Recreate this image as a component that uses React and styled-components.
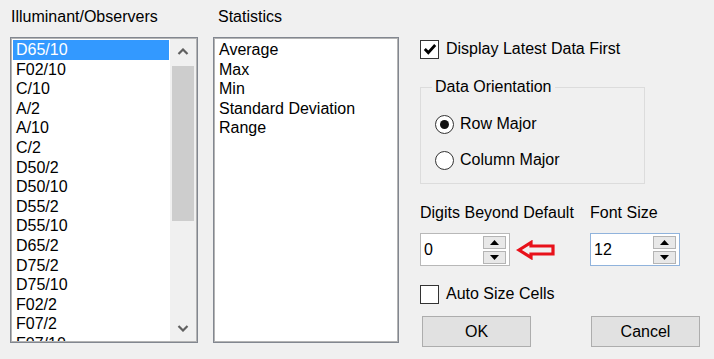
import React from "react"
import styled, { createGlobalStyle } from "styled-components"

const illuminants = [
  "D65/10", "F02/10", "C/10", "A/2", "A/10", "C/2", "D50/2", "D50/10",
  "D55/2", "D55/10", "D65/2", "D75/2", "D75/10", "F02/2", "F07/2", "F07/10",
]
const statistics = ["Average", "Max", "Min", "Standard Deviation", "Range"]

function Chevron({ down }) {
  return (
    <svg width="12" height="8" viewBox="0 0 12 8">
      <path
        d={down ? "M1.5 2 L6 6.5 L10.5 2" : "M1.5 6 L6 1.5 L10.5 6"}
        fill="none"
        stroke="#606060"
        strokeWidth="2.2"
      />
    </svg>
  )
}

function Check() {
  return (
    <svg width="14" height="14" viewBox="0 0 14 14">
      <path d="M1.8 7 L5.3 10.6 L12.2 3" fill="none" stroke="#000" strokeWidth="2.8" />
    </svg>
  )
}

function Triangle({ down }) {
  return (
    <svg width="9" height="5" viewBox="0 0 9 5">
      <path d={down ? "M0 0 H9 L4.5 5 Z" : "M0 5 H9 L4.5 0 Z"} fill="#000" />
    </svg>
  )
}

function RedArrow() {
  return (
    <svg width="40" height="20" viewBox="0 0 40 20">
      <path
        d="M3 10 L15 2.5 L15 6 L37 6 L37 14 L15 14 L15 17.5 Z"
        fill="none"
        stroke="#e8111a"
        strokeWidth="3.2"
        strokeLinejoin="miter"
      />
    </svg>
  )
}

function SpinBox({ value, focused }) {
  return (
    <Spin focused={focused}>
      <SpinValue>{value}</SpinValue>
      <SpinButtons>
        <SpinButton><Triangle /></SpinButton>
        <SpinButton><Triangle down /></SpinButton>
      </SpinButtons>
    </Spin>
  )
}

export default function App() {
  return (
    <>
      <GlobalStyle />
      <Dialog>
        <ListColumn width={188}>
          <Label indent={1}>Illuminant/Observers</Label>
          <ListBox>
            <Items>
              {illuminants.map((name, i) => (
                <Item key={name} selected={i === 0}>{name}</Item>
              ))}
            </Items>
            <ScrollBar>
              <ScrollArrow><Chevron /></ScrollArrow>
              <Track>
                <Thumb />
              </Track>
              <ScrollArrow><Chevron down /></ScrollArrow>
            </ScrollBar>
          </ListBox>
        </ListColumn>

        <ListColumn width={186} gap={15}>
          <Label indent={5}>Statistics</Label>
          <ListBox>
            <Items>
              {statistics.map((name) => (
                <Item key={name}>{name}</Item>
              ))}
            </Items>
          </ListBox>
        </ListColumn>

        <OptionsColumn>
          <CheckRow top={32}>
            <CheckBox><Check /></CheckBox>
            Display Latest Data First
          </CheckRow>

          <Group>
            <Legend>Data Orientation</Legend>
            <RadioRow top={17}>
              <Radio checked />
              Row Major
            </RadioRow>
            <RadioRow top={16}>
              <Radio />
              Column Major
            </RadioRow>
          </Group>

          <SpinGrid>
            <Label>Digits Beyond Default</Label>
            <Label>Font Size</Label>
            <SpinCell>
              <SpinBox value="0" />
              <ArrowMark><RedArrow /></ArrowMark>
            </SpinCell>
            <SpinCell>
              <SpinBox value="12" focused />
            </SpinCell>
          </SpinGrid>

          <CheckRow top={18}>
            <CheckBox />
            Auto Size Cells
          </CheckRow>

          <ButtonRow>
            <Button>OK</Button>
            <Button>Cancel</Button>
          </ButtonRow>
        </OptionsColumn>
      </Dialog>
    </>
  )
}

const GlobalStyle = createGlobalStyle`
  html, body {
    margin: 0;
    padding: 0;
    background: #f0f0f0;
  }
  body {
    font-family: "Liberation Sans", Arial, sans-serif;
    font-size: 16px;
    color: #000;
  }
`
const Dialog = styled.div`
  display: flex;
  align-items: flex-start;
  width: 714px;
  height: 359px;
  box-sizing: border-box;
  padding: 7px 0 0 10px;
  background: #f0f0f0;
`
const ListColumn = styled.div`
  display: flex;
  flex-direction: column;
  width: ${(p) => p.width}px;
  margin-left: ${(p) => p.gap || 0}px;
  gap: 10px;
`
const Label = styled.div`
  height: 20px;
  line-height: 20px;
  padding-left: ${(p) => p.indent || 0}px;
  white-space: nowrap;
`
const ListBox = styled.div`
  display: flex;
  height: 306px;
  box-sizing: border-box;
  border: 1px solid #828790;
  box-shadow: inset 1px 1px 0 #b4b4b4, inset -1px -1px 0 #b4b4b4;
  padding: 1px;
  background: #fff;
  overflow: hidden;
`
const Items = styled.div`
  flex: 1;
  padding: 1px;
  overflow: hidden;
`
const Item = styled.div`
  height: 19.6px;
  line-height: 19.6px;
  padding-left: 3px;
  white-space: nowrap;
  background: ${(p) => (p.selected ? "#3399ff" : "transparent")};
  color: ${(p) => (p.selected ? "#fff" : "#000")};
`
const ScrollBar = styled.div`
  display: flex;
  flex-direction: column;
  width: 26px;
  background: #f0f0f0;
`
const ScrollArrow = styled.div`
  display: flex;
  align-items: center;
  justify-content: center;
  height: 26px;
`
const Track = styled.div`
  flex: 1;
  padding: 1px 2px 0;
`
const Thumb = styled.div`
  height: 155px;
  background: #cdcdcd;
`
const OptionsColumn = styled.div`
  display: flex;
  flex-direction: column;
  width: 284px;
  margin-left: 21px;
`
const CheckRow = styled.div`
  display: flex;
  align-items: center;
  gap: 7px;
  height: 20px;
  margin-top: ${(p) => p.top}px;
  white-space: nowrap;
`
const CheckBox = styled.div`
  display: flex;
  align-items: center;
  justify-content: center;
  width: 19px;
  height: 19px;
  box-sizing: border-box;
  border: 1px solid #333;
  background: #fff;
`
const Group = styled.fieldset`
  width: 225px;
  box-sizing: border-box;
  margin: 18px 0 0;
  padding: 0 0 13px 14px;
  border: 1px solid #dcdcdc;
`
const Legend = styled.legend`
  height: 20px;
  line-height: 20px;
  padding: 0 3px;
  margin-left: -3px;
`
const RadioRow = styled.div`
  display: flex;
  align-items: center;
  gap: 6px;
  height: 20px;
  margin-top: ${(p) => p.top}px;
  white-space: nowrap;
`
const Radio = styled.div`
  position: relative;
  width: 19px;
  height: 19px;
  box-sizing: border-box;
  border: 1px solid #333;
  border-radius: 50%;
  background: #fff;
  &::after {
    content: "";
    display: ${(p) => (p.checked ? "block" : "none")};
    position: absolute;
    left: 4px;
    top: 4px;
    width: 9px;
    height: 9px;
    border-radius: 50%;
    background: #111;
  }
`
const SpinGrid = styled.div`
  display: grid;
  grid-template-columns: 170px 1fr;
  row-gap: 10px;
  margin-top: 19px;
`
const SpinCell = styled.div`
  display: flex;
  align-items: center;
`
const Spin = styled.div`
  display: flex;
  align-items: center;
  width: 90px;
  height: 33px;
  box-sizing: border-box;
  border: 1px solid ${(p) => (p.focused ? "#90b3dc" : "#b8b8b8")};
  background: #fff;
  padding: 1px 3px 1px 3px;
`
const SpinValue = styled.div`
  flex: 1;
  line-height: 20px;
`
const SpinButtons = styled.div`
  display: flex;
  flex-direction: column;
  gap: 2px;
`
const SpinButton = styled.div`
  display: flex;
  align-items: center;
  justify-content: center;
  width: 23px;
  height: 13px;
  box-sizing: border-box;
  border: 1px solid #b4b4b4;
  background: #e8e8e8;
`
const ArrowMark = styled.div`
  display: flex;
  margin-left: 6px;
  margin-top: 1px;
`
const ButtonRow = styled.div`
  display: flex;
  gap: 60px;
  margin-top: 12px;
  padding-left: 2px;
`
const Button = styled.div`
  display: flex;
  align-items: center;
  justify-content: center;
  width: 109px;
  height: 31px;
  box-sizing: border-box;
  border: 1px solid #adadad;
  background: #e1e1e1;
`
